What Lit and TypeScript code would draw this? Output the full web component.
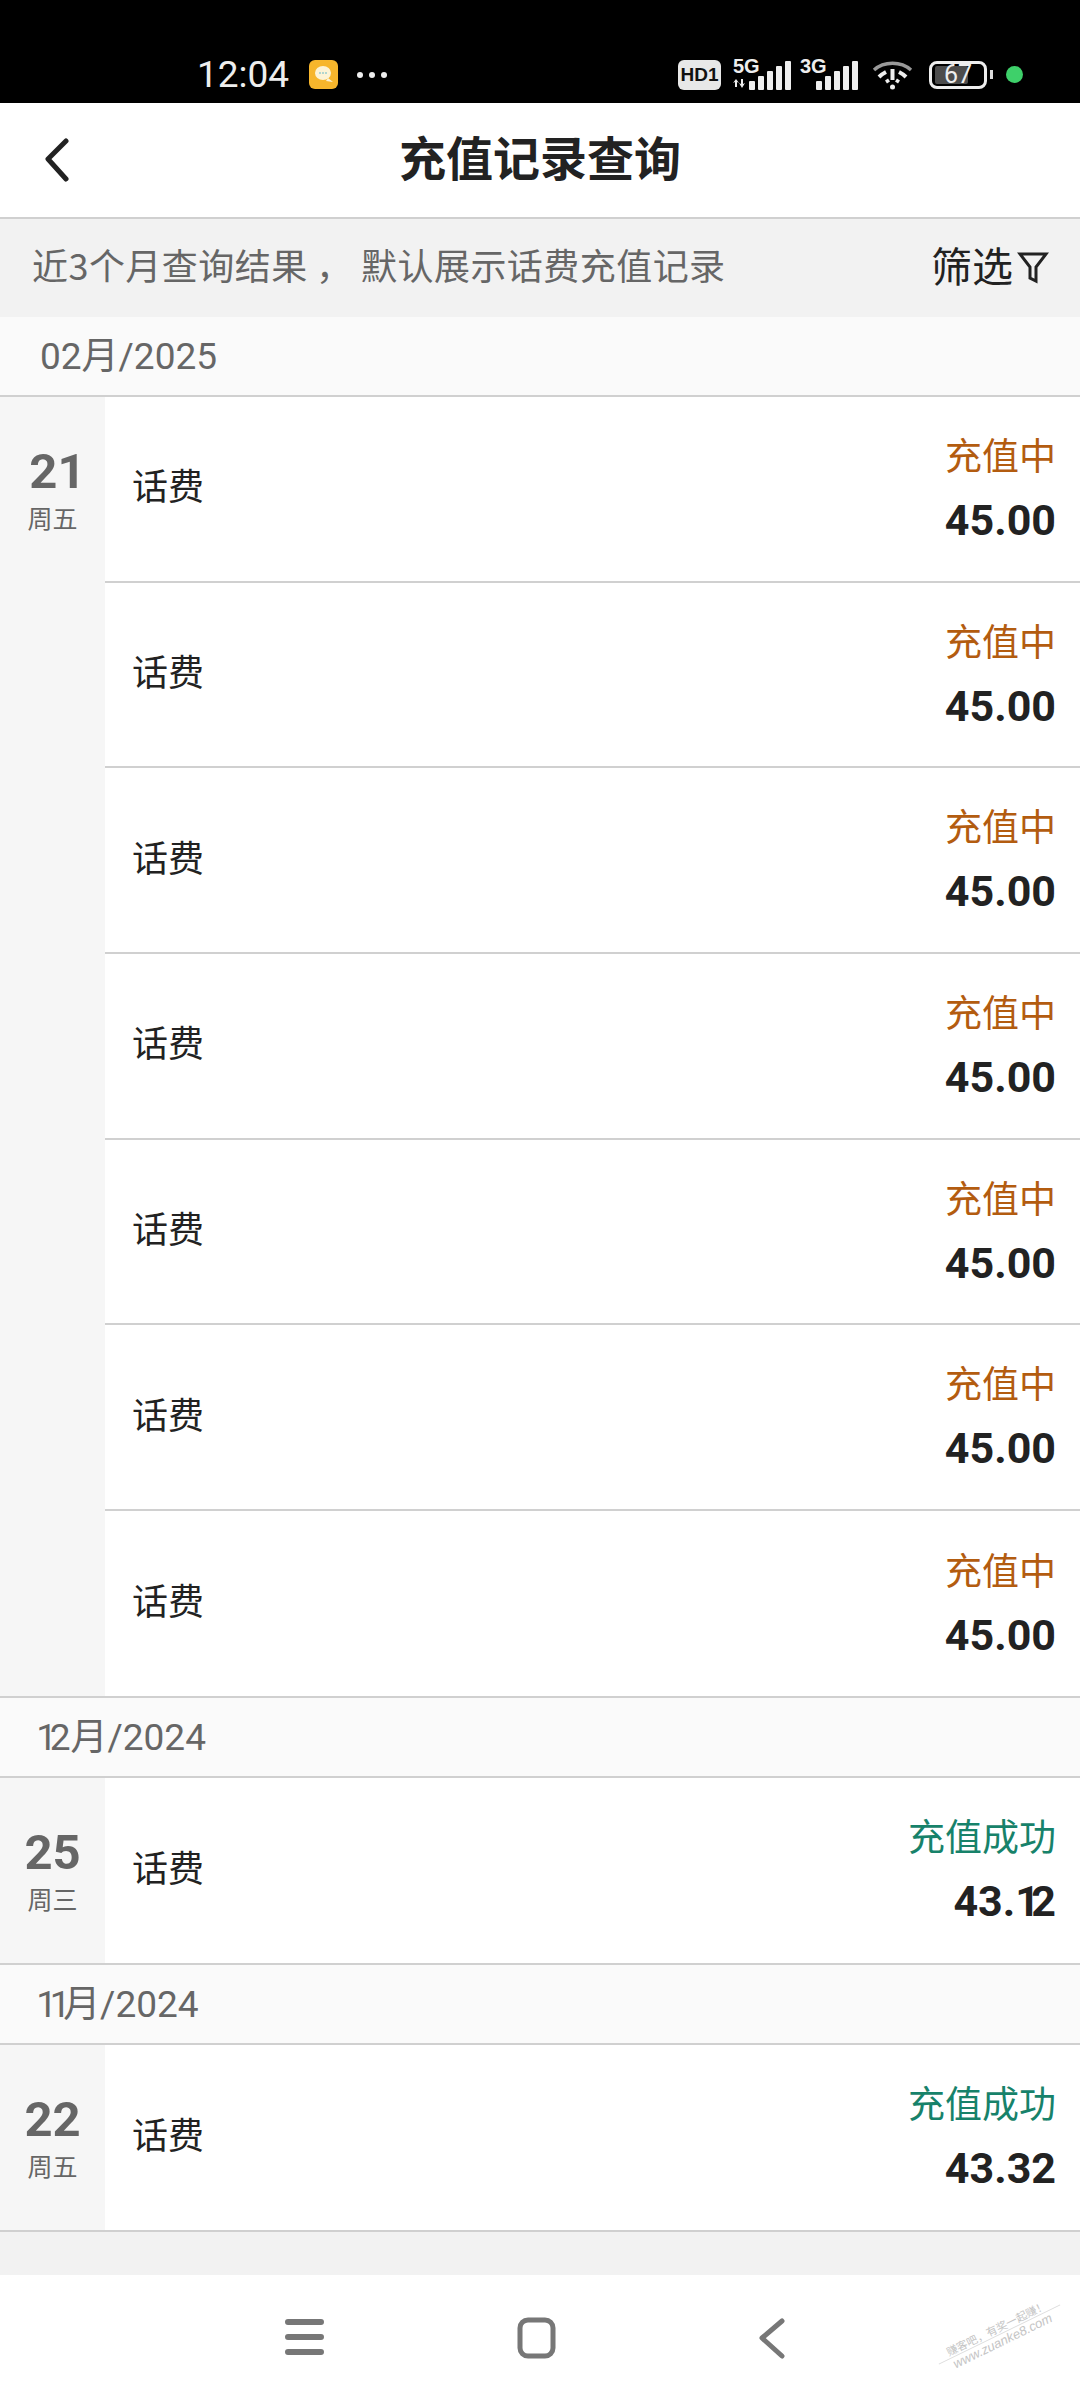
import { css, html, LitElement, svg } from "lit";
import { customElement } from "lit/decorators.js";

interface Item {
  status: string;
  amount: string;
  done: boolean;
}

interface Group {
  month: string;
  day: string;
  week: string;
  items: Item[];
}

const pending: Item = { status: "充值中", amount: "45.00", done: false };

const groups: Group[] = [
  { month: "02月/2025", day: "21", week: "周五", items: Array(7).fill(pending) },
  { month: "12月/2024", day: "25", week: "周三", items: [{ status: "充值成功", amount: "43.12", done: true }] },
  { month: "11月/2024", day: "22", week: "周五", items: [{ status: "充值成功", amount: "43.32", done: true }] },
];

// the reference font has a proportional "1", Roboto's is tabular
const num = (text: string) =>
  text.split(/(1)/).map((part) => (part === "1" ? html`<span class="one">1</span>` : part));

const bars = () => svg`
  <rect x="16" y="20" width="6" height="9" rx="1" />
  <rect x="25" y="15" width="6" height="14" rx="1" />
  <rect x="34" y="10" width="6" height="19" rx="1" />
  <rect x="43" y="5" width="6" height="24" rx="1" />
  <rect x="52" y="0" width="6" height="29" rx="1" />
`;

@customElement("app-root")
export class AppRoot extends LitElement {
  static override styles = css`
    :host {
      display: block;
      width: 1080px;
      height: 2400px;
      position: relative;
      overflow: hidden;
      background: #f2f2f2;
      font-family: "Noto Sans CJK SC", "Noto Sans", sans-serif;
    }
    .one {
      letter-spacing: -0.2em;
    }
    .month .one:first-child {
      margin-left: -0.1em;
    }

    .status {
      height: 103px;
      background: #000;
      display: flex;
      align-items: center;
      padding: 53px 57px 7px 197px;
      box-sizing: border-box;
      color: #eee;
    }
    .time {
      font: 400 37px/44px Roboto, sans-serif;
    }
    .app-icon {
      width: 29px;
      height: 29px;
      margin-left: 20px;
      display: block;
    }
    .dots {
      display: flex;
      gap: 6px;
      margin-left: 19px;
    }
    .dots i {
      width: 6px;
      height: 6px;
      border-radius: 50%;
      background: #eee;
    }
    .status-right {
      margin-left: auto;
      display: flex;
      align-items: center;
    }
    .hd {
      width: 43px;
      height: 30px;
      border-radius: 6px;
      background: #e8e8e8;
      color: #111;
      font: 700 19px/30px "Liberation Sans", sans-serif;
      text-align: center;
    }
    .net {
      position: relative;
      width: 60px;
      height: 32px;
      margin-left: 12px;
    }
    .net.second {
      margin-left: 7px;
    }
    .net b {
      position: absolute;
      left: 0;
      top: -3px;
      font: 700 20px/20px "Liberation Sans", sans-serif;
      color: #eee;
    }
    .net svg {
      position: absolute;
      left: 0;
      top: 2px;
      display: block;
    }
    .wifi {
      margin-left: 12px;
      display: block;
    }
    .battery {
      margin-left: 16px;
      width: 58px;
      height: 28px;
      border: 3px solid #eee;
      border-radius: 8px;
      box-sizing: border-box;
      position: relative;
      color: #eee;
      font: 400 25px/22px Roboto, sans-serif;
      text-align: center;
    }
    .battery span {
      position: relative;
    }
    .battery::before {
      content: "";
      position: absolute;
      left: 3px;
      top: 2px;
      bottom: 2px;
      width: 33px;
      background: #4c4c4c;
      border-radius: 2px;
    }
    .nub {
      width: 3px;
      height: 9px;
      margin-left: 3px;
      background: #ddd;
    }
    .dot {
      width: 17px;
      height: 17px;
      border-radius: 50%;
      background: #3ed06a;
      margin-left: 13px;
    }

    .header {
      height: 104px;
      padding-bottom: 10px;
      background: #fff;
      border-bottom: 2px solid #d0d0d0;
      display: flex;
      align-items: center;
      justify-content: center;
      position: relative;
    }
    .back {
      position: absolute;
      left: 44px;
      top: 35px;
      display: block;
    }
    .title {
      font-size: 47px;
      font-weight: 700;
      color: #222;
    }

    .filter {
      height: 98px;
      box-sizing: border-box;
      background: #f2f2f2;
      display: flex;
      align-items: center;
      justify-content: space-between;
      padding: 0 31px 8px 32px;
    }
    .filter-text {
      font-size: 36px;
      letter-spacing: 0.45px;
      color: #666;
      white-space: pre;
    }
    .filter-btn {
      display: flex;
      align-items: center;
      gap: 4px;
      font-size: 41px;
      color: #222;
    }
    .filter-btn svg {
      display: block;
      margin-top: 6px;
    }

    .month {
      height: 78px;
      background: #fafafa;
      border-bottom: 2px solid #d0d0d0;
      padding-left: 40px;
      font: 400 37px/79px Roboto, "Noto Sans CJK SC", sans-serif;
      color: #666;
    }
    .group {
      display: flex;
      background: #fff;
      border-bottom: 2px solid #d0d0d0;
    }
    .date {
      width: 105px;
      background: #f6f6f6;
      display: flex;
      flex-direction: column;
      align-items: center;
      padding-top: 47px;
      box-sizing: border-box;
      flex: none;
    }
    .day {
      font: 700 49px/56px Roboto, sans-serif;
      color: #666;
    }
    .week {
      font-size: 25px;
      line-height: 34px;
      color: #666;
    }
    .rows {
      flex: 1;
    }
    .row {
      height: 185.7px;
      box-sizing: border-box;
      padding: 0 24px 4px 27px;
      display: flex;
      align-items: center;
      justify-content: space-between;
      border-bottom: 2px solid #d0d0d0;
    }
    .row:last-child {
      height: 184.8px;
      border-bottom: none;
    }
    .name {
      font-size: 36px;
      color: #222;
      margin-bottom: 5px;
    }
    .right {
      text-align: right;
    }
    .state {
      font-size: 37px;
      line-height: 52px;
      color: #b35c10;
    }
    .state.done {
      color: #17826a;
    }
    .amount {
      font: 700 43px/52px Roboto, sans-serif;
      color: #222;
      margin-top: 14px;
    }

    .nav {
      position: absolute;
      left: 0;
      right: 0;
      bottom: 0;
      height: 125px;
      background: #fff;
    }
    .nav svg {
      position: absolute;
      left: 0;
      top: 0;
    }
    .mark {
      position: absolute;
      left: 932px;
      top: 2320px;
      width: 135px;
      color: #c4c4c4;
      font-size: 11px;
      line-height: 14px;
      transform: rotate(-26deg);
      text-align: center;
    }
    .mark span {
      display: block;
      border-top: 1px solid #ddd;
      font-family: "Liberation Sans", sans-serif;
      font-style: italic;
      font-size: 13px;
    }
  `;

  private renderStatus() {
    return html`
      <div class="status">
        <div class="time">12:04</div>
        <svg class="app-icon" viewBox="0 0 29 29">
          <rect width="29" height="29" rx="6" fill="#f7b62c" />
          <ellipse cx="14" cy="13" rx="8" ry="7" fill="#fdf3d5" />
          <path d="M19 18l5 4-7-1z" fill="#fdf3d5" />
          <circle cx="11" cy="13" r="1" fill="#9cc" />
          <circle cx="14" cy="13" r="1" fill="#9cc" />
          <circle cx="17" cy="13" r="1" fill="#9cc" />
        </svg>
        <div class="dots"><i></i><i></i><i></i></div>
        <div class="status-right">
          <div class="hd">HD1</div>
          <div class="net">
            <b>5G</b>
            <svg width="60" height="30" viewBox="0 0 60 30" fill="#eee">
              <path d="M2 26v-5l-2 1 3-4 3 4-2-1v5zM10 18v5l2-1-3 5-3-5 2 1v-5z" />
              ${bars()}
            </svg>
          </div>
          <div class="net second">
            <b>3G</b>
            <svg width="60" height="30" viewBox="0 0 60 30" fill="#eee">${bars()}</svg>
          </div>
          <svg class="wifi" width="41" height="33" viewBox="0 0 41 33" fill="none" stroke="#eee">
            <path d="M2 12C12 3 29 3 39 12" stroke-width="3.5" stroke="#999" />
            <path d="M7 19c3-3 5-4 7-5M34 19c-3-3-5-4-7-5" stroke-width="4" />
            <path d="M14 24l3-2M27 24l-3-2" stroke-width="3.5" />
            <path d="M20.5 11v11" stroke-width="4" />
            <circle cx="20.5" cy="29" r="2.5" fill="#eee" stroke="none" />
          </svg>
          <div class="battery"><span>67</span></div>
          <div class="nub"></div>
          <div class="dot"></div>
        </div>
      </div>
    `;
  }

  private renderGroup(g: Group) {
    return html`
      <div class="month">${num(g.month)}</div>
      <div class="group">
        <div class="date">
          <div class="day">${num(g.day)}</div>
          <div class="week">${g.week}</div>
        </div>
        <div class="rows">
          ${g.items.map(
            (it) => html`
              <div class="row">
                <div class="name">话费</div>
                <div class="right">
                  <div class="state ${it.done ? "done" : ""}">${it.status}</div>
                  <div class="amount">${num(it.amount)}</div>
                </div>
              </div>
            `,
          )}
        </div>
      </div>
    `;
  }

  override render() {
    return html`
      ${this.renderStatus()}
      <div class="header">
        <svg class="back" width="30" height="44" viewBox="0 0 30 44" fill="none" stroke="#222" stroke-width="5" stroke-linecap="round" stroke-linejoin="round">
          <path d="M22 3L4 21l18 20" />
        </svg>
        <div class="title">充值记录查询</div>
      </div>
      <div class="filter">
        <div class="filter-text">近3个月查询结果 ， 默认展示话费充值记录</div>
        <div class="filter-btn">
          筛选
          <svg width="32" height="34" viewBox="0 0 32 34" fill="none" stroke="#222" stroke-width="3">
            <path d="M3 4h26L19 17v14l-6-3V17z" />
          </svg>
        </div>
      </div>
      ${groups.map((g) => this.renderGroup(g))}
      <div class="nav">
        <svg width="1080" height="125" viewBox="0 0 1080 125" fill="none" stroke="#777" stroke-linecap="round" stroke-linejoin="round">
          <path d="M288 47h33M288 62h33M288 77h33" stroke-width="6" />
          <rect x="520" y="45" width="33" height="36" rx="8" stroke-width="5" />
          <path d="M782 46l-20 17 20 18" stroke-width="5" />
        </svg>
      </div>
      <div class="mark">赚客吧，有奖一起赚！<span>www.zuanke8.com</span></div>
    `;
  }
}

declare global {
  interface HTMLElementTagNameMap {
    "app-root": AppRoot;
  }
}
